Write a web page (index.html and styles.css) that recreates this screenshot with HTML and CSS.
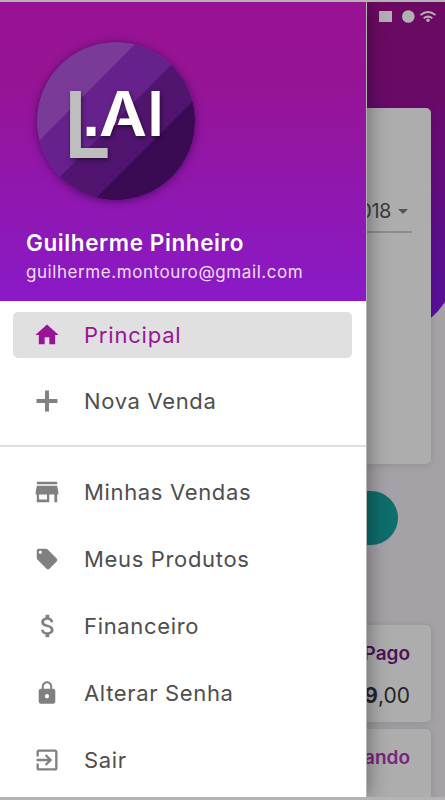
FILE: index.html
```
<!DOCTYPE html>
<html lang="pt-BR">
<head>
    <meta charset="UTF-8">
    <meta name="viewport" content="width=device-width, initial-scale=1.0">
    <title>L.AI</title>
    <link rel="stylesheet" href="styles.css">
</head>
<body>
    <div class="phone">
        <main class="page">
            <svg class="page_bg" viewBox="0 0 445 320">
                <defs>
                    <linearGradient id="bg" x1="0" y1="0" x2="0" y2="1">
                        <stop offset="0" stop-color="#6c0a62"/>
                        <stop offset="0.25" stop-color="#6b0a66"/>
                        <stop offset="1" stop-color="#54109a"/>
                    </linearGradient>
                </defs>
                <path fill="url(#bg)" d="M0 0H445V300Q439 309 431 316H0z"/>
            </svg>
            <div class="status">
                <svg width="64" height="16" viewBox="0 0 64 16">
                    <path d="M1 3h13v11H1z"/>
                    <circle cx="30.300" cy="8.500" r="6.300"/>
                    <g fill="none" stroke="#b3afb3" stroke-width="2">
                        <path d="M42.500 7q7.500-6 15 0M45.700 10.300q4.300-3.300 8.600 0"/>
                    </g>
                    <circle cx="50" cy="12.300" r="1.700"/>
                </svg>
            </div>
            <section class="card filter">
                <div class="select">2018 <span class="caret"></span></div>
            </section>
            <div class="action"></div>
            <section class="card sale">
                <h3 class="paid">Pago</h3>
                <p><b>9</b>,00</p>
            </section>
            <section class="card sale last">
                <h3 class="waiting">Aguardando</h3>
            </section>
        </main>

        <aside class="drawer">
            <header class="profile">
                <svg class="logo" width="158" height="158" viewBox="0 0 158 158">
                    <defs>
                        <clipPath id="round"><circle cx="79" cy="79" r="79"/></clipPath>
                    </defs>
                    <g clip-path="url(#round)">
                        <path fill="#7a3b98" d="M0 0h158v158H0z"/>
                        <path fill="#67218d" d="M101-1L158-57V158H0V101z"/>
                        <path fill="#51156f" d="M136 21L158 0V158H0z"/>
                        <path fill="#3a0a53" d="M158 57V158H57z"/>
                    </g>
                    <g class="logo_text">
                        <text class="logo_l" x="27" y="115.500" textLength="47" lengthAdjust="spacingAndGlyphs">L</text>
                        <text class="logo_ai dot" x="45.500" y="94">.</text>
                        <text class="logo_ai" x="62" y="94" textLength="48" lengthAdjust="spacingAndGlyphs">A</text>
                        <text class="logo_ai" x="110" y="94">I</text>
                    </g>
                    <!-- gap between the left leg of the A and its bar -->
                    <path fill="#58187a" d="M80.500 74.500h3.300l-3.300 9h-3.300z"/>
                </svg>
                <h2>Guilherme Pinheiro</h2>
                <p>guilherme.montouro@gmail.com</p>
            </header>

            <nav class="menu">
                <a class="item active">
                    <svg viewBox="0 0 24 24"><path d="M10 20v-6h4v6h5v-8h3L12 3 2 12h3v8z"/></svg>
                    <span>Principal</span>
                </a>
                <a class="item">
                    <svg viewBox="0 0 24 24"><path d="M10.300 3h3.400v7.300H21v3.400h-7.300V21h-3.400v-7.300H3v-3.400h7.300z"/></svg>
                    <span>Nova Venda</span>
                </a>
            </nav>
            <nav class="menu second">
                <a class="item">
                    <svg class="store" viewBox="0 0 24 24"><path d="M21 3H3v2.200h18V3zm1 11.200V12l-1-5.500H3L2 12v2.200h1V21h11v-6.800h4.500V21H21v-6.800h1zM12 18.700H5v-4.500h7v4.500z"/></svg>
                    <span>Minhas Vendas</span>
                </a>
                <a class="item">
                    <svg class="tag" viewBox="0 0 24 24"><path d="M21.410 11.580l-9-9C12.050 2.220 11.550 2 11 2H4c-1.100 0-2 .9-2 2v7c0 .55.220 1.050.590 1.420l9 9c.360.360.860.580 1.410.580s1.050-.220 1.410-.590l7-7c.370-.360.590-.860.590-1.410s-.230-1.060-.590-1.420zM5.500 7C4.670 7 4 6.330 4 5.500S4.670 4 5.500 4 7 4.670 7 5.500 6.330 7 5.500 7z"/></svg>
                    <span>Meus Produtos</span>
                </a>
                <a class="item">
                    <svg class="money" viewBox="0 0 24 24"><path d="M11.800 10.900c-2.270-.59-3-1.200-3-2.150 0-1.090 1.010-1.850 2.700-1.850 1.780 0 2.440.85 2.500 2.100h2.210c-.07-1.720-1.120-3.300-3.210-3.810V3h-3v2.160c-1.940.42-3.500 1.680-3.500 3.610 0 2.310 1.910 3.460 4.700 4.130 2.500.6 3 1.480 3 2.410 0 .69-.49 1.790-2.700 1.790-2.060 0-2.870-.92-2.980-2.100h-2.200c.12 2.190 1.760 3.420 3.680 3.830V21h3v-2.150c1.950-.37 3.500-1.500 3.500-3.550 0-2.840-2.430-3.810-4.700-4.400z"/></svg>
                    <span>Financeiro</span>
                </a>
                <a class="item">
                    <svg class="lock" viewBox="0 0 24 24"><path d="M18 8h-1V6c0-2.760-2.240-5-5-5S7 3.240 7 6v2H6c-1.100 0-2 .9-2 2v10c0 1.100.9 2 2 2h12c1.100 0 2-.9 2-2V10c0-1.100-.9-2-2-2zm-6 9c-1.100 0-2-.9-2-2s.9-2 2-2 2 .9 2 2-.9 2-2 2zm3.100-9H8.900V6c0-1.710 1.390-3.100 3.100-3.100s3.100 1.390 3.100 3.100v2z"/></svg>
                    <span>Alterar Senha</span>
                </a>
                <a class="item">
                    <svg viewBox="0 0 24 24"><path d="M10.090 15.590L11.500 17l5-5-5-5-1.410 1.410L12.670 11H3v2h9.670l-2.580 2.590zM19 3H5c-1.110 0-2 .9-2 2v4h2V5h14v14H5v-4H3v4c0 1.100.89 2 2 2h14c1.100 0 2-.9 2-2V5c0-1.100-.9-2-2-2z"/></svg>
                    <span>Sair</span>
                </a>
            </nav>
        </aside>
    </div>
</body>
</html>
```
FILE: styles.css
```
* {
    margin: 0;
    padding: 0;
    box-sizing: border-box;
}

body {
    font-family: Inter, "Open Sans", sans-serif;
    background-color: #b3b3b3;
}

.phone {
    position: relative;
    width: 445px;
    height: 800px;
    padding: 2px 0 3px;
    overflow: hidden;
}

.page {
    position: relative;
    height: 795px;
    padding: 0 14px 0 15px;
    overflow: hidden;
    background-color: #a4a2a6;
}

.page_bg {
    position: absolute;
    top: 0;
    left: 0;
    width: 445px;
    height: 320px;
}

.status {
    position: relative;
    display: flex;
    justify-content: flex-end;
    height: 106px;
    padding-top: 6px;
    margin-right: -11px;
}

.status svg { fill: #b3afb3; }

.card {
    position: relative;
    border-radius: 5px;
    background-color: #adadad;
    box-shadow: 0 1px 7px rgba(0, 0, 0, 0.13);
}

.filter {
    height: 356px;
    padding: 83px 19px 0;
}

.select {
    display: flex;
    justify-content: flex-end;
    align-items: center;
    height: 42px;
    padding-right: 4px;
    border-bottom: 2px solid #8c8c8c;
    color: #3c3c3c;
    font-size: 20px;
    letter-spacing: -0.5px;
}

.caret {
    margin-left: 7px;
    border: 5px solid transparent;
    border-top-color: #555;
    border-bottom: 0;
}

.action {
    width: 350px;
    height: 54px;
    margin: 27px 0 80px 33px;
    border-radius: 27px;
    background-color: #0d6e6c;
}

.sale {
    height: 97px;
    padding: 18px 21px;
    margin-bottom: 7px;
    text-align: right;
}

.sale h3 {
    font-size: 19px;
    font-weight: 600;
    line-height: 22px;
}

.sale p {
    margin-top: 18px;
    font-size: 21px;
    line-height: 26px;
    color: #252525;
}

.paid { color: #4e1158; }
.waiting { color: #7b2380; }

.drawer {
    position: absolute;
    top: 2px;
    left: 0;
    width: 367px;
    height: 795px;
    border-right: 1px solid #b5b5b5;
    background-color: white;
    box-shadow: 0 0 20px rgba(0, 0, 0, 0.45);
    clip-path: inset(0 -30px 0 0);
}

.profile {
    height: 299px;
    width: 366px;
    padding: 40px 26px 0 37px;
    background: linear-gradient(#981394, #961494 25%, #8a1ac8);
    color: white;
}

.logo {
    display: block;
    border-radius: 50%;
    box-shadow: 0 1px 8px rgba(40, 0, 60, 0.6);
}

.logo_text { filter: drop-shadow(1px 2px 2px rgba(0, 0, 0, 0.5)); }

.logo_l {
    font-size: 92px;
    font-weight: 600;
    fill: #bebebe;
}

.logo_ai {
    font-size: 62px;
    font-weight: 600;
    fill: white;
}

.dot {
    font-family: "Liberation Sans", sans-serif;
    font-weight: 700;
}

.profile h2 {
    margin: 29px 0 0 -11px;
    font-size: 22.500px;
    font-weight: 600;
    line-height: 28px;
    letter-spacing: 0.6px;
    white-space: nowrap;
}

.profile p {
    margin: 3px 0 0 -11px;
    font-size: 17px;
    line-height: 24px;
    letter-spacing: 0.57px;
    white-space: nowrap;
    color: #f0dcf7;
}

.menu {
    display: flex;
    flex-direction: column;
    gap: 20px;
    height: 146px;
    padding: 11px 14px 0 13px;
    border-bottom: 2px solid #e0e0e0;
}

.second {
    gap: 21px;
    height: auto;
    padding-top: 22px;
    border: none;
}

.item {
    display: flex;
    align-items: center;
    height: 46px;
    padding-left: 20px;
    border-radius: 5px;
    color: #4e4e4e;
    font-size: 22px;
    letter-spacing: 0.66px;
}

.item svg {
    width: 28px;
    height: 28px;
    margin-right: 23px;
    fill: #808080;
}

.item .store { transform: scale(0.97); }
.item .tag { transform: scale(0.88); }
.item .money { transform: translateX(1px) scale(1.06); }
.item .lock { transform: scale(0.89, 0.92); }

.active {
    background-color: #e0e0e0;
    color: #981398;
    letter-spacing: 0.8px;
}

.item.active svg { fill: #981398; }
```
